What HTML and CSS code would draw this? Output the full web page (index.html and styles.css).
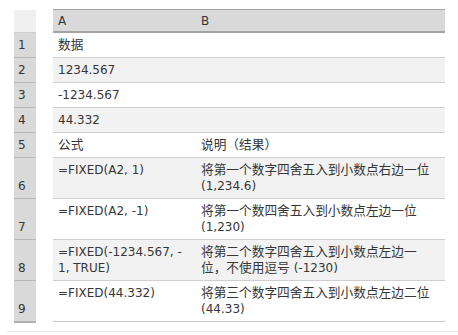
FILE: index.html
```html
<!DOCTYPE html>
<html lang="zh-CN">
<head>
<meta charset="utf-8">
<title>FIXED</title>
<link rel="stylesheet" href="styles.css">
</head>
<body>
<div class="page">
  <table class="sheet">
    <colgroup>
      <col class="c-num"><col class="c-gap"><col class="c-a"><col class="c-b">
    </colgroup>
    <thead>
      <tr>
        <th class="num corner"></th><th class="gap"></th>
        <th class="hd">A</th><th class="hd">B</th>
      </tr>
    </thead>
    <tbody>
      <tr><td class="num">1</td><td class="gap"></td><td><span class="zh">数据</span></td><td></td></tr>
      <tr class="alt"><td class="num">2</td><td class="gap"></td><td>1234.567</td><td></td></tr>
      <tr><td class="num">3</td><td class="gap"></td><td>-1234.567</td><td></td></tr>
      <tr class="alt"><td class="num">4</td><td class="gap"></td><td>44.332</td><td></td></tr>
      <tr><td class="num">5</td><td class="gap"></td><td><span class="zh">公式</span></td><td><span class="zh">说明（结果）</span></td></tr>
      <tr class="alt"><td class="num">6</td><td class="gap"></td><td>=FIXED(A2, 1)</td><td><span class="zh">将第一个数字四舍五入到小数点右边一位</span> (1,234.6)</td></tr>
      <tr><td class="num">7</td><td class="gap"></td><td>=FIXED(A2, -1)</td><td><span class="zh">将第一个数四舍五入到小数点左边一位</span> (1,230)</td></tr>
      <tr class="alt"><td class="num">8</td><td class="gap"></td><td>=FIXED(-1234.567, -<br>1, TRUE)</td><td><span class="zh">将第二个数字四舍五入到小数点左边一位，不使用逗号</span> (-1230)</td></tr>
      <tr class="last"><td class="num">9</td><td class="gap"></td><td>=FIXED(44.332)</td><td><span class="zh">将第三个数字四舍五入到小数点左边二位</span> (44.33)</td></tr>
    </tbody>
  </table>
  <div class="rule"></div>
</div>
</body>
</html>
```

FILE: styles.css
```css
html, body {
  margin: 0;
  padding: 0;
  background: #ffffff;
}
body {
  font-family: "DejaVu Sans", "Noto Sans CJK SC", sans-serif;
  font-size: 12px;
  color: #363636;
}
.zh {
  font-family: "Noto Sans CJK SC", sans-serif;
  font-size: 12.7px;
  line-height: 12px;
}
.page {
  padding: 9px 0 0 0;
}
.sheet {
  margin-left: 14px;
  width: 431px;
  border-collapse: collapse;
  table-layout: fixed;
}
.c-num { width: 22px; }
.c-gap { width: 17px; }
.c-a { width: 143px; }
.c-b { width: 249px; }

.sheet th,
.sheet td {
  padding: 4px 5px;
  line-height: 16px;
  text-align: left;
  vertical-align: top;
  font-weight: normal;
  border-bottom: 1px solid #cfcfcf;
}
.sheet th.hd {
  background: #d9d9d9;
  border-top: 1px solid #a3a3a3;
  border-bottom: 2px solid #a3a3a3;
  padding: 3px 5px 2px;
}
.sheet .alt td {
  background: #f2f2f2;
}
.sheet .num,
.sheet .alt td.num {
  background: #d9d9d9;
  padding: 4px 0 4px 4px;
  vertical-align: bottom;
  border-bottom: 1px solid #b8b8b8;
}
.sheet th.corner {
  background: #f0f0f0;
  border-bottom: 1px solid #cfcfcf;
}
.sheet .gap,
.sheet .alt td.gap {
  background: #ffffff;
  border: none;
  padding: 0;
}
.sheet .last td {
  border-bottom: 1px solid #c8c8c8;
}
.sheet .last td.num {
  border-bottom: 2px solid #b0b0b0;
}
.sheet .last td.gap {
  border: none;
}
.rule {
  margin: 8px 0 0 7px;
  border-top: 1px solid #e8e8e8;
}
```
